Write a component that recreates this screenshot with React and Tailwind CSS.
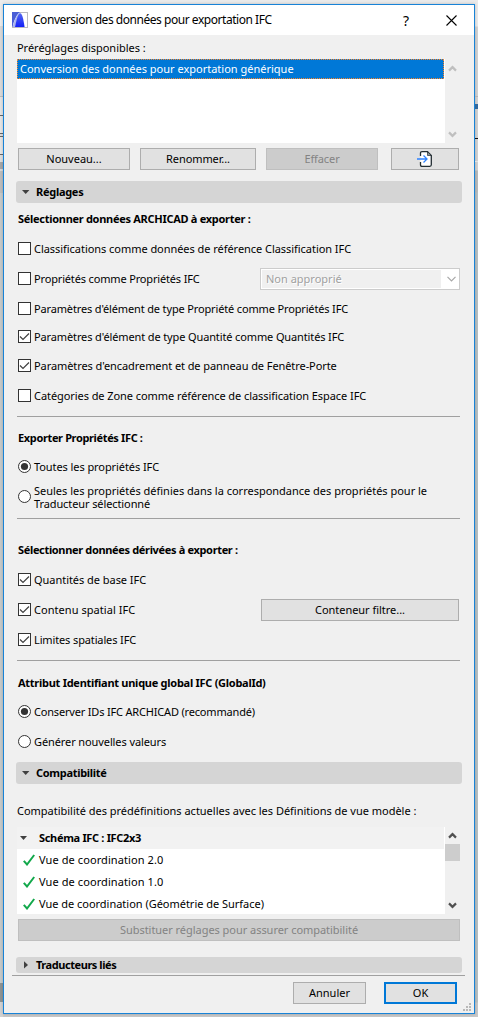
import React from "react";

function Check({ checked }) {
  return (
    <span className="block h-[13px] w-[13px] shrink-0 border border-[#333333] bg-white">
      {checked && (
        <svg className="block" width="11" height="11" viewBox="0 0 11 11" fill="none" stroke="#404040" strokeWidth="1.2">
          <path d="M1 5.5L4 8.5L10 2.5" />
        </svg>
      )}
    </span>
  );
}

function Radio({ checked }) {
  return (
    <svg className="block shrink-0" width="13" height="13" viewBox="0 0 13 13">
      <circle cx="6.5" cy="6.5" r="6" fill="#fff" stroke="#333333" />
      {checked && <circle cx="6.5" cy="6.5" r="3.6" fill="#333333" />}
    </svg>
  );
}

function Option({ kind = "check", checked, className, children }) {
  return (
    <div className={`flex h-[13px] shrink-0 items-center gap-[3px] pl-[2px] ${className}`}>
      {kind === "check" ? <Check checked={checked} /> : <Radio checked={checked} />}
      <span className="leading-[13px] whitespace-nowrap">{children}</span>
    </div>
  );
}

function Button({ className, children }) {
  return (
    <button className={`flex h-[22px] shrink-0 items-center justify-center border whitespace-nowrap ${className}`}>
      {children}
    </button>
  );
}

const NORMAL = "border-[#adadad] bg-[#e1e1e1]";
const DISABLED = "border-[#bfbfbf] bg-[#cccccc] text-[#838383]";

function Arrow({ up, color }) {
  return (
    <svg className="block" width="9" height="7" viewBox="0 0 9 7" fill="none" stroke={color} strokeWidth="2.2">
      <path d={up ? "M1 5.6L4.5 2.1L8 5.6" : "M1 1.4L4.5 4.9L8 1.4"} />
    </svg>
  );
}

function Section({ open, className, children }) {
  return (
    <div className={`-mr-[2px] -ml-px flex shrink-0 items-center rounded-[3px] bg-[#d5d5d5] pl-[6px] font-bold ${className}`}>
      <svg className="mr-[6px] block" width="8" height="8" viewBox="0 0 8 8" fill="#404040">
        <path d={open ? "M0 2h7.4L3.7 6z" : "M2 0.2v7.4L6 3.9z"} />
      </svg>
      <span>{children}</span>
    </div>
  );
}

function Heading({ className, children }) {
  return <div className={`h-4 shrink-0 pl-px leading-4 font-bold ${className}`}>{children}</div>;
}

function Divider({ className }) {
  return <div className={`h-px shrink-0 bg-[#a0a0a0] ${className}`} />;
}

function SchemaRow({ className, children }) {
  return (
    <div className={`flex h-[22px] items-center pl-[6px] ${className}`}>
      <svg className="mr-[4px] block" width="12" height="12" viewBox="0 0 12 12" fill="none" stroke="#12a84b" strokeWidth="2">
        <path d="M0.8 6.8L4 10.5L11.2 1" />
      </svg>
      <span>{children}</span>
    </div>
  );
}

export default function App() {
  return (
    <div className="flex h-[1017px] w-[478px] bg-[linear-gradient(180deg,#eaeaea_0px,#eaeaea_26px,#d2d2d2_27px,#d2d2d2_170px,#b9bbbb_171px,#b9bbbb_192px,#b8c0c2_193px,#b8c0c2_1002px,#c8c8c8_1003px)] font-['Noto_Sans','Open_Sans',sans-serif] text-[11px] text-black">
      <div className="h-[1017px] w-[3px] shrink-0 bg-[linear-gradient(180deg,#ececec_26px,#d9d9d9_26px,#d9d9d9_96px,#bcbcbc_96px,#bcbcbc_97px,#e4e4e4_97px,#e4e4e4_115px,#666_115px,#666_116px,#e6e6e6_116px,#e6e6e6_133px,#666_133px,#666_134px,#ddd_134px,#ddd_136px,#666_136px,#666_137px,#e6e6e6_137px,#e6e6e6_154px,#666_154px,#666_155px,#dedede_155px,#dedede_162px,#a8a8a8_162px,#a8a8a8_169px,#d8d8d8_169px,#d8d8d8_171px,#bdbdbd_171px,#bdbdbd_193px,#c6caca_193px,#c6caca_983px,#8f9494_983px,#8f9494_1002px,#d2d2d2_1002px)]" />
      <div className="mt-[4px] flex h-[1010px] w-[472px] shrink-0 flex-col border border-[#1883d7] bg-[#f0f0f0] shadow-[0_0_3px_rgba(0,0,0,0.2)]">
        <header className="flex h-[30px] shrink-0 items-center bg-white pl-[8px]">
          <svg className="mr-[5px] block" width="16" height="16" viewBox="0 0 16 16">
            <defs>
              <linearGradient id="logo" x1="0" y1="0" x2="0" y2="1">
                <stop offset="0" stopColor="#5468f0" />
                <stop offset="1" stopColor="#1420f8" />
              </linearGradient>
            </defs>
            <rect x="0.5" y="0.5" width="15" height="15" fill="#fff" stroke="#b9b9c0" />
            <path d="M0 0H8C5 2 2 8 0.5 15H0Z" fill="#4a5ed6" />
            <path d="M0.5 15C2.5 8 5 2 8 1L6 6L3 15Z" fill="#a9b4f0" />
            <path d="M3 15C4.5 8 6 1.2 8.2 1.2C10.4 1.2 11.5 8 12.6 15Z" fill="url(#logo)" />
          </svg>
          <span className="text-[12px] tracking-[-0.46px]">Conversion des données pour exportation IFC</span>
          <span className="ml-auto text-[14px]">?</span>
          <svg className="mr-[17px] ml-[37px] block" width="11" height="11" viewBox="0 0 11 11" stroke="#000" strokeWidth="1.1">
            <path d="M0.5 0.5L10.5 10.5M10.5 0.5L0.5 10.5" />
          </svg>
        </header>

        <main className="flex w-[456px] grow flex-col pl-[13px]">
          <div className="mt-[5px] h-4 leading-4 tracking-[-0.03px]">Préréglages disponibles :</div>

          <div className="mt-[3px] flex h-[84px] w-[443px] shrink-0">
            <div className="w-[428px] bg-white">
              <div className="flex h-5 w-[427px] items-center border border-dotted border-[#ff8728] bg-[#0078d7] pl-[2px] text-white">
                Conversion des données pour exportation générique
              </div>
            </div>
            <div className="flex w-[15px] flex-col items-center justify-between pt-[6px] pb-[5px]">
              <Arrow up color="#bfbfbf" />
              <Arrow color="#bfbfbf" />
            </div>
          </div>

          <div className="mt-[5px] flex shrink-0 pl-px">
            <Button className={`w-[112px] ${NORMAL}`}>Nouveau...</Button>
            <Button className={`ml-[10px] w-[116px] tracking-[-0.1px] ${NORMAL}`}>Renommer...</Button>
            <Button className={`ml-[10px] w-[112px] tracking-[-0.1px] ${DISABLED}`}>Effacer</Button>
            <Button className={`ml-[13px] w-[68px] ${NORMAL}`}>
              <svg className="block" width="16" height="16" viewBox="0 0 16 16" fill="none">
                <path d="M3.5 5V2.2Q3.5 0.7 5 0.7H10.5L14.3 4.5V13.8Q14.3 15.3 12.8 15.3H5Q3.5 15.3 3.5 13.8V11" fill="#fff" stroke="#222d33" strokeWidth="1.3" />
                <path d="M10.5 0.7V4.5H14.3Z" fill="#8d9396" stroke="#222d33" strokeWidth="0.7" />
                <path d="M0 8H10M6.5 4.5L10 8L6.5 11.5" stroke="#2f83ff" strokeWidth="1.3" />
              </svg>
            </Button>
          </div>

          <Section open className="mt-[11px] h-[22px] tracking-[-0.28px]">Réglages</Section>

          <Heading className="mt-[8px] tracking-[-0.29px]">Sélectionner données ARCHICAD à exporter :</Heading>
          <Option className="mt-[15px] -ml-px tracking-[-0.045px]">Classifications comme données de référence Classification IFC</Option>
          <div className="mt-[13px] -ml-px flex h-[22px] shrink-0">
            <Option className="mt-[4px] w-[244px] tracking-[-0.16px]">Propriétés comme Propriétés IFC</Option>
            <div className="flex w-[200px] items-center border border-[#cccccc] bg-white p-px">
              <span className="flex h-[18px] w-[179px] items-center bg-[#f0f0f0] pl-[4px] text-[#a0a0a0] [text-shadow:1px_1px_0_#fff]">Non approprié</span>
              <svg className="ml-[6px] block" width="9" height="6" viewBox="0 0 9 6" fill="none" stroke="#a8a8a8" strokeWidth="1.2">
                <path d="M0.5 0.8L4.5 4.8L8.5 0.8" />
              </svg>
            </div>
          </div>
          <Option className="mt-[12px] -ml-px tracking-[-0.15px]">Paramètres d'élément de type Propriété comme Propriétés IFC</Option>
          <Option checked className="mt-[15px] -ml-px tracking-[-0.125px]">Paramètres d'élément de type Quantité comme Quantités IFC</Option>
          <Option checked className="mt-[16px] -ml-px tracking-[-0.08px]">Paramètres d'encadrement et de panneau de Fenêtre-Porte</Option>
          <Option className="mt-[17px] -ml-px tracking-[-0.07px]">Catégories de Zone comme référence de classification Espace IFC</Option>

          <Divider className="mt-[14px]" />

          <Heading className="mt-[13px] tracking-[-0.36px]">Exporter Propriétés IFC :</Heading>
          <Option kind="radio" checked className="mt-[14px] -ml-px tracking-[-0.08px]">Toutes les propriétés IFC</Option>
          <Option kind="radio" className="mt-[17px] -ml-px tracking-[-0.01px]">
            Seules les propriétés définies dans la correspondance des propriétés pour le<br />
            <span className="tracking-[-0.1px]">Traducteur sélectionné</span>
          </Option>

          <Divider className="mt-[15px]" />

          <Heading className="mt-[23px] tracking-[-0.34px]">Sélectionner données dérivées à exporter :</Heading>
          <Option checked className="mt-[15px] -ml-px tracking-[-0.04px]">Quantités de base IFC</Option>
          <div className="mt-[13px] -ml-px flex h-[22px] shrink-0">
            <Option checked className="mt-[4px] w-[245px] tracking-[0.05px]">Contenu spatial IFC</Option>
            <Button className={`w-[198px] tracking-[-0.03px] ${NORMAL}`}>Conteneur filtre...</Button>
          </div>
          <Option checked className="mt-[12px] -ml-px tracking-[-0.13px]">Limites spatiales IFC</Option>

          <Divider className="mt-[14px]" />

          <Heading className="mt-[14px] tracking-[-0.27px]">Attribut Identifiant unique global IFC (GlobalId)</Heading>
          <Option kind="radio" checked className="mt-[14px] -ml-px tracking-[-0.18px]">Conserver IDs IFC ARCHICAD (recommandé)</Option>
          <Option kind="radio" className="mt-[17px] -ml-px tracking-[-0.1px]">Générer nouvelles valeurs</Option>

          <Section open className="mt-[14px] h-[22px] tracking-[-0.3px]">Compatibilité</Section>

          <div className="mt-[19px] h-4 leading-4 tracking-[-0.015px]">Compatibilité des prédéfinitions actuelles avec les Définitions de vue modèle :</div>

          <div className="mt-[8px] flex h-[87px] w-[443px] shrink-0">
            <div className="h-[87px] w-[428px] overflow-hidden bg-white">
              <div className="flex h-[22px] w-[427px] items-center bg-[#f2f2f2] pl-[3px] font-bold tracking-[-0.32px]">
                <svg className="mr-[12px] block" width="7" height="4" viewBox="0 0 7 4" fill="#404040">
                  <path d="M0 0h7L3.5 4z" />
                </svg>
                Schéma IFC : IFC2x3
              </div>
              <SchemaRow className="tracking-[0.09px]">Vue de coordination 2.0</SchemaRow>
              <SchemaRow className="tracking-[0.09px]">Vue de coordination 1.0</SchemaRow>
              <SchemaRow className="tracking-[-0.02px]">Vue de coordination (Géométrie de Surface)</SchemaRow>
            </div>
            <div className="flex w-[15px] flex-col items-center pt-[5px] pb-[5px]">
              <Arrow up color="#505050" />
              <div className="mt-[5px] h-[17px] w-[15px] bg-[#cdcdcd]" />
              <div className="mt-auto"><Arrow color="#505050" /></div>
            </div>
          </div>

          <Button className={`mt-[5px] ml-px w-[442px] tracking-[-0.04px] ${DISABLED}`}>Substituer réglages pour assurer compatibilité</Button>
          <Section className="mt-[16px] h-4 tracking-[-0.44px]">Traducteurs liés</Section>
        </main>

        <footer className="mt-[2px] ml-[8px] flex h-[38px] w-[462px] shrink-0 flex-col">
          <div className="h-px w-[453px] shrink-0 bg-[#a0a0a0]" />
          <div className="mt-[6px] flex">
            <Button className={`ml-[281px] w-[73px] ${NORMAL}`}>Annuler</Button>
            <button className="ml-[18px] flex h-[22px] w-[73px] items-center justify-center border-2 border-[#0078d7] bg-[#e1e1e1]">OK</button>
            <svg className="mt-[21px] ml-[6px] block" width="8" height="8" viewBox="0 0 8 8" fill="#b8b8b8">
              <path d="M6 0h2v2H6zM3 3h2v2H3zM6 3h2v2H6zM0 6h2v2H0zM3 6h2v2H3zM6 6h2v2H6z" />
            </svg>
          </div>
        </footer>
      </div>
      <div className="h-[1017px] w-[3px] shrink-0 bg-[linear-gradient(180deg,transparent_96px,#b5b5b5_96px,#b5b5b5_97px,transparent_97px,transparent_104px,#33689c_104px,#33689c_109px,transparent_109px,transparent_138px,#111_138px,#111_139px,transparent_139px,transparent_161px,#e2e2e2_161px,#e2e2e2_162px,transparent_162px)]" />
    </div>
  );
}
